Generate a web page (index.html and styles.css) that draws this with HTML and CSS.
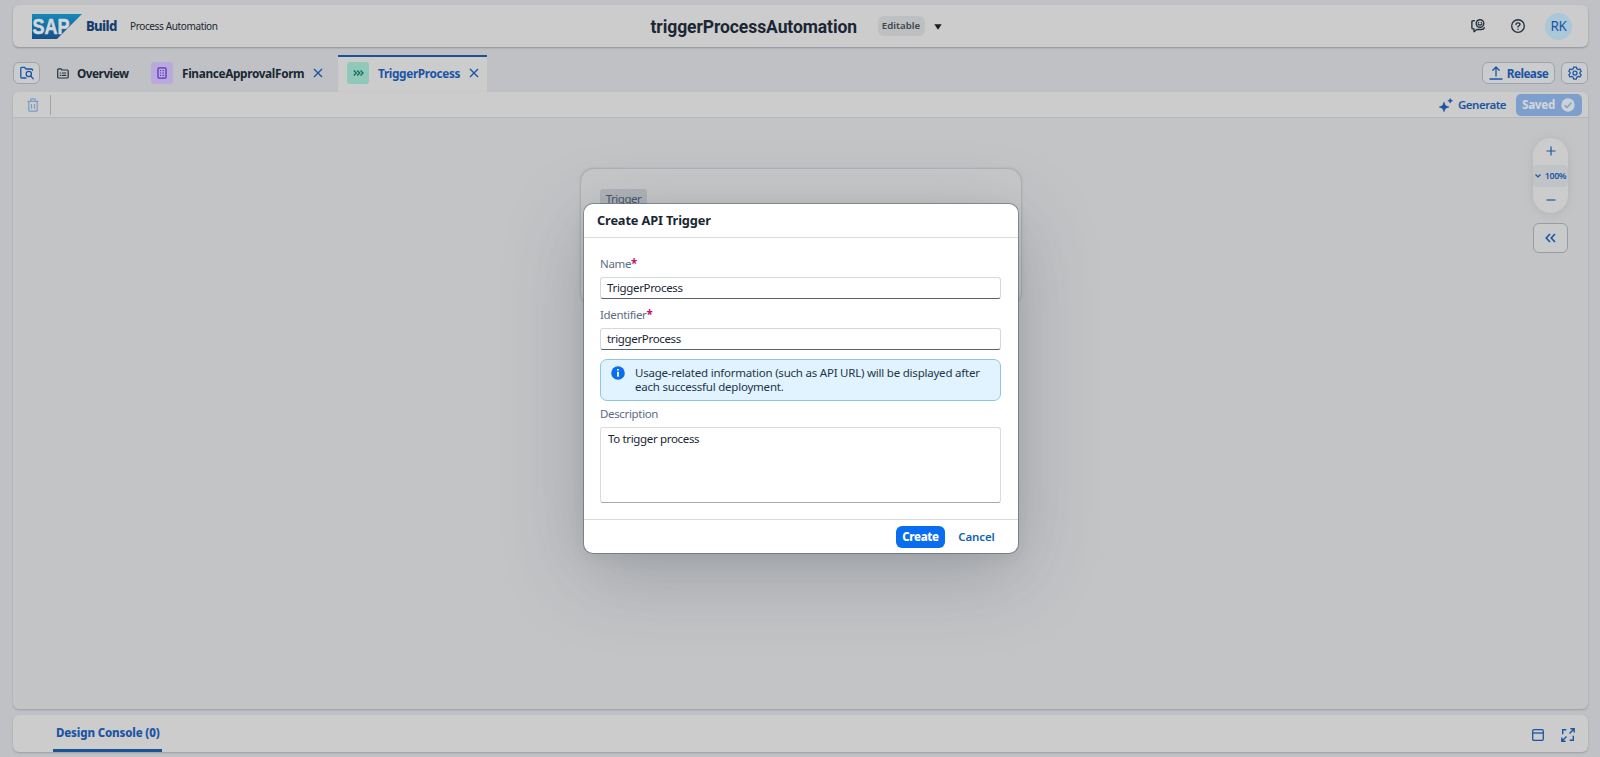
FILE: index.html
```html
<!DOCTYPE html>
<html lang="en">
<head>
<meta charset="utf-8">
<title>triggerProcessAutomation</title>
<link rel="stylesheet" href="styles.css">
</head>
<body>
<div class="app">
  <header class="shell">
    <div class="brand">
      <svg class="logo" width="50" height="25" viewBox="0 0 50 25">
        <defs><linearGradient id="sap" x1="0" y1="0" x2="0" y2="1"><stop offset="0" stop-color="#1889b8"/><stop offset="1" stop-color="#17508b"/></linearGradient></defs>
        <path d="M0 0H50L25 25H0Z" fill="url(#sap)"/>
        <text x="0.5" y="20" textLength="37" lengthAdjust="spacingAndGlyphs" class="logo-text">SAP</text>
      </svg>
      <span class="build">Build</span>
      <span class="product">Process Automation</span>
    </div>
    <div class="project">
      <h1 class="project-name">triggerProcessAutomation</h1>
      <span class="badge">Editable</span>
      <svg class="caret" width="8" height="6" viewBox="0 0 8 6"><path d="M.3.3H7.7L4 5.8Z" fill="#161e26"/></svg>
    </div>
    <div class="shell-actions">
      <svg width="16" height="16" viewBox="0 0 16 16" fill="none" stroke="#26323e" stroke-width="1.4" stroke-linecap="round" stroke-linejoin="round"><path d="M4.3 2.7H3Q1.9 2.7 1.9 3.8V9.7Q1.9 10.9 3 10.9H4V13.7L6.9 11.5H11.2Q13.8 11.5 14.3 9.7"/><circle cx="10" cy="5.5" r="3.8"/><path d="M8.1 6Q10 8.2 11.9 6"/><path d="M8.7 4.4V4.5M11.3 4.4V4.5"/></svg>
      <svg width="16" height="16" viewBox="0 0 16 16" fill="none" stroke="#26323e" stroke-width="1.35" stroke-linecap="round" stroke-linejoin="round"><circle cx="8" cy="8" r="6.3"/><path d="M6 6.6Q6 4.8 8 4.8T10 6.5Q10 7.4 8 8.5V9"/><path d="M8 11.1V11.2"/></svg>
      <span class="avatar">RK</span>
    </div>
  </header>

  <nav class="tabs">
    <button class="icon-btn">
      <svg width="14" height="14" viewBox="0 0 14 14" fill="none" stroke="#1a55a5" stroke-width="1.3" stroke-linecap="round" stroke-linejoin="round"><path d="M6 12H2Q.8 12 .8 10.8V2.5Q.8 1.3 2 1.3H4.5L6 3H11.3Q12.6 3 12.6 4.3"/><circle cx="8.8" cy="8" r="2.6"/><path d="M10.8 10L13.2 12.8"/></svg>
    </button>
    <a class="tab tab-overview">
      <svg width="12" height="11" viewBox="0 0 12 11" fill="none" stroke="#26323e" stroke-width="1.2" stroke-linecap="round" stroke-linejoin="round"><path d="M.7 9V1.8Q.7.8 1.7.8H4L5 2H10.2Q11.2 2 11.2 3V9Q11.2 10 10.2 10H1.7Q.7 10 .7 9Z"/><path d="M3.2 5H3.6M5.3 5H8.8M3.2 7.4H3.6M5.3 7.4H8.8"/></svg>
      <span class="t-overview">Overview</span>
    </a>
    <a class="tab tab-form">
      <span class="tile tile-form"><svg width="10" height="12" viewBox="0 0 10 12" fill="none" stroke="#5b35c0" stroke-width="1.3"><rect x="1" y=".8" width="8" height="10.4" rx="1.2"/><path d="M3 3.6H4.1M5.5 3.6H7M3 6H4.1M5.5 6H7M3 8.4H4.1M5.5 8.4H7" stroke-width="1"/></svg></span>
      <span class="t-form">FinanceApprovalForm</span>
      <svg class="close" width="10" height="10" viewBox="0 0 10 10"><path d="M1 1L9 9M9 1L1 9" stroke="#1a55a5" stroke-width="1.4"/></svg>
    </a>
    <a class="tab tab-active">
      <span class="tile tile-process"><svg width="11" height="6" viewBox="0 0 11 6" fill="none" stroke="#136a60" stroke-width="1.3"><path d="M.8.5L3.3 3L.8 5.5M4.2.5L6.7 3L4.2 5.5M7.5.5L10 3L7.5 5.5"/></svg></span>
      <span class="t-process">TriggerProcess</span>
      <svg class="close" width="10" height="10" viewBox="0 0 10 10"><path d="M1 1L9 9M9 1L1 9" stroke="#1a55a5" stroke-width="1.4"/></svg>
    </a>
    <div class="tab-actions">
      <button class="release">
        <svg width="14" height="14" viewBox="0 0 14 14" fill="none" stroke="#1a55a5" stroke-width="1.3" stroke-linecap="round" stroke-linejoin="round"><path d="M7 10V1.2M3.8 4.2L7 1L10.2 4.2M1 13H13"/></svg>
        <span class="t-release">Release</span>
      </button>
      <button class="icon-btn">
        <svg width="14" height="14" viewBox="0 0 14 14" fill="none" stroke="#1a55a5" stroke-width="1.25" stroke-linejoin="round"><path d="M5.7 1H8.3L8.8 2.8L10.2 3.6L12 3L13.2 5.2L11.9 6.4V7.6L13.2 8.8L12 11L10.2 10.4L8.8 11.2L8.3 13H5.7L5.2 11.2L3.8 10.4L2 11L.8 8.8L2.1 7.6V6.4L.8 5.2L2 3L3.8 3.6L5.2 2.8Z"/><circle cx="7" cy="7" r="2"/></svg>
      </button>
    </div>
  </nav>

  <main class="editor">
    <div class="toolbar">
      <svg class="trash" width="12" height="14" viewBox="0 0 12 14" fill="none" stroke="#7b9bc6" stroke-width="1.2" stroke-linejoin="round"><path d="M.5 3.4H11.5M3.7 3.2V1.6Q3.7.8 4.5.8H7.5Q8.3.8 8.3 1.6V3.2M1.8 3.6V12.3Q1.8 13.2 2.7 13.2H9.3Q10.2 13.2 10.2 12.3V3.6M4.5 6V10.7M7.5 6V10.7"/></svg>
      <span class="divider"></span>
      <div class="toolbar-right">
        <svg width="14" height="14" viewBox="0 0 14 14" fill="#1a55a5" stroke="#1a55a5" stroke-width=".5" stroke-linejoin="round"><path d="M5 4L6.4 7.6L10 9L6.4 10.4L5 13.8L3.6 10.4L.2 9L3.6 7.6Z"/><path d="M11.2.4L11.9 2.1L13.6 2.8L11.9 3.5L11.2 5.2L10.5 3.5L8.8 2.8L10.5 2.1Z"/></svg>
        <span class="t-generate">Generate</span>
        <button class="saved"><span class="t-saved">Saved</span><svg width="14" height="14" viewBox="0 0 14 14"><circle cx="7" cy="7" r="6.7" fill="#cdd0d4"/><path d="M3.7 7.2L6 9.5L10.3 4.8" fill="none" stroke="#7d9fcd" stroke-width="1.4"/></svg></button>
      </div>
    </div>
    <div class="canvas">
      <section class="trigger-card"><span class="trigger-tag">Trigger</span></section>
      <aside class="view-controls">
        <div class="zoom">
          <span class="zoom-step"><svg width="10" height="10" viewBox="0 0 10 10"><path d="M5 .5V9.5M.5 5H9.5" stroke="#1a55a5" stroke-width="1.2"/></svg></span>
          <span class="zoom-level"><svg width="6" height="4" viewBox="0 0 6 4"><path d="M.5.5L3 3L5.5.5" fill="none" stroke="#1a55a5" stroke-width="1.2"/></svg><b>100%</b></span>
          <span class="zoom-step"><svg width="10" height="10" viewBox="0 0 10 10"><path d="M.5 5H9.5" stroke="#1a55a5" stroke-width="1.2"/></svg></span>
        </div>
        <button class="collapse"><svg width="11" height="10" viewBox="0 0 11 10" fill="none" stroke="#1a55a5" stroke-width="1.6"><path d="M5 1L1.2 5L5 9M10 1L6.2 5L10 9"/></svg></button>
      </aside>
    </div>
  </main>

  <footer class="console">
    <span class="console-tab"><span class="t-console">Design Console (0)</span></span>
    <div class="console-actions">
      <svg width="12" height="12" viewBox="0 0 12 12" fill="none" stroke="#1a55a5" stroke-width="1.3"><rect x=".7" y=".7" width="10.6" height="10.6" rx="1.3"/><path d="M.7 4H11.3"/></svg>
      <svg width="14" height="14" viewBox="0 0 14 14" fill="none" stroke="#1a55a5" stroke-width="1.4"><path d="M5.3 1.8H1.7V6.2M8.7 12.2H12.3V7.8M8.5 5.5L13 1M9.4.8H13.2V4.6M5.5 8.5L1 13M.8 9.4V13.2H4.6"/></svg>
    </div>
  </footer>
</div>

<div class="dialog" role="dialog">
  <header class="dialog-head"><h2 class="t-dialog">Create API Trigger</h2></header>
  <div class="dialog-body">
    <label class="label"><span class="t-name">Name</span><b>*</b></label>
    <div class="input"><span class="v-name">TriggerProcess</span></div>
    <label class="label"><span class="t-ident">Identifier</span><b>*</b></label>
    <div class="input"><span class="v-ident">triggerProcess</span></div>
    <div class="info">
      <svg width="14" height="14" viewBox="0 0 14 14"><circle cx="7" cy="7" r="6.8" fill="#0a6cee"/><path d="M6.1 3H7.9V4.6H6.1ZM6.1 5.7H7.9V10.8H6.1Z" fill="#fff"/></svg>
      <p class="info-text"><span class="i-one">Usage-related information (such as API URL) will be displayed after</span><br><span class="i-two">each successful deployment.</span></p>
    </div>
    <label class="label label-desc"><span class="t-desc">Description</span></label>
    <div class="textarea"><span class="v-desc">To trigger process</span></div>
  </div>
  <footer class="dialog-foot">
    <button class="create"><span class="t-create">Create</span></button>
    <button class="cancel"><span class="t-cancel">Cancel</span></button>
  </footer>
</div>
</body>
</html>
```
FILE: styles.css
```css
* { box-sizing: border-box; }
body {
  margin: 0;
  width: 1600px;
  height: 757px;
  overflow: hidden;
  background: #bfc1c4;
  color: #1a2733;
  font-family: "Noto Sans", sans-serif;
  font-size: 11.5px;
  letter-spacing: -0.34px;
  white-space: nowrap;
}
h1, h2, p { margin: 0; }
svg { display: block; flex: none; }
button { margin: 0; padding: 0; font: inherit; letter-spacing: inherit; border: 0; background: none; color: #1a55a5; }

.app {
  display: flex;
  flex-direction: column;
  height: 757px;
  padding: 5px 12px 5px 13px;
}

/* Shell bar */
.shell {
  display: grid;
  grid-template-columns: 637.5px 1fr auto;
  align-items: center;
  height: 42px;
  background: #cccccc;
  border-radius: 6px;
  box-shadow: 0 1px 2px #8d9094;
}
.brand { display: flex; align-items: center; padding-left: 19px; }
.logo-text { font: bold 21.5px "Liberation Sans", sans-serif; fill: #d2d8dc; stroke: #d2d8dc; stroke-width: .6px; letter-spacing: 0; }
.build { margin-left: 4px; font-size: 13.2px; font-weight: 800; color: #153e70; letter-spacing: -0.7px; width: 31px; }
.product { margin-left: 13px; font-size: 10px; letter-spacing: -0.37px; }
.project { display: flex; align-items: center; }
.project-name { width: 227px; font: bold 17.5px Roboto, sans-serif; letter-spacing: -0.08px; padding-top: 1px; }
.badge {
  width: 47px;
  height: 20px;
  line-height: 20px;
  text-align: center;
  border-radius: 6px;
  background: #bdbfc1;
  color: #3f464d;
  font-size: 9.7px;
  font-weight: 600;
  letter-spacing: 0;
}
.caret { margin: 1px 0 0 9px; }
.shell-actions { display: flex; align-items: center; gap: 24px; padding-right: 16px; }
.avatar {
  width: 27px;
  height: 27px;
  margin-left: -5px;
  border-radius: 50%;
  background: #aac8d8;
  color: #1a55a5;
  font-size: 13.5px;
  line-height: 27px;
  text-align: center;
}

/* Tabs */
.tabs { display: flex; align-items: center; height: 37px; margin-top: 8px; padding-bottom: 1px; color: #1a2733; font-weight: 700; font-size: 11.8px; }
.icon-btn, .release {
  display: flex;
  align-items: center;
  justify-content: center;
  width: 27px;
  height: 22px;
  border: 1px solid #9da3aa;
  border-radius: 6px;
  background: #cbcccd;
}
.tab { display: flex; align-items: center; height: 36px; }
.tab-overview { width: 94px; margin-left: 17px; gap: 8px; letter-spacing: -0.5px; }
.tab-form { width: 187px; }
.tile { display: grid; place-items: center; width: 22px; height: 22px; border-radius: 3px; margin-right: 9px; }
.tile-form { background: #b9a9dc; }
.tile-process { background: #90c9b9; }
.close { margin-left: 9px; }
.t-form { width: 122px; }
.tab-active { width: 149px; height: 38px; margin-bottom: -2px; padding: 0 0 2px 9px; background: #cccccc; box-shadow: inset 0 2px #1a5296; color: #1a55a5; }
.t-process { width: 82px; }
.tab-actions { display: flex; gap: 6px; margin-left: auto; }
.release { width: 73px; gap: 4px; letter-spacing: -0.55px; }

/* Editor */
.editor { display: flex; flex-direction: column; height: 617px; border-radius: 6px; background: #c3c4c6; box-shadow: 0 1px 2px #9a9da1; }
.toolbar { display: flex; align-items: center; height: 26px; padding: 0 6px 0 14px; background: #cccccc; border-bottom: 1px solid #b5b7b9; border-radius: 6px 6px 0 0; }
.divider { width: 1px; height: 20px; margin-left: 11px; background: #a2a5a8; }
.toolbar-right { display: flex; align-items: center; margin-left: auto; color: #1a55a5; font-weight: 600; }
.t-generate { width: 58px; margin-left: 5px; letter-spacing: -0.5px; }
.saved { display: flex; align-items: center; width: 66px; height: 22px; padding-left: 6px; border-radius: 5px; background: #7d9fcd; color: #d1d4d8; font-weight: 800; }
.t-saved { width: 39px; text-align: left; }
.canvas { display: flex; justify-content: space-between; flex: 1; padding: 50px 20px 0 567px; }
.trigger-card { width: 442px; height: 138px; padding: 20px 19px; border: 1px solid #afb2b5; border-radius: 14px; background: #c7c8c9; box-shadow: 0 0 2px #aaa; }
.trigger-tag { display: block; width: 47px; height: 20px; border-radius: 3px; background: #b0b4b8; color: #47576a; text-align: center; line-height: 20px; letter-spacing: -0.5px; }
.view-controls { display: flex; flex-direction: column; gap: 10px; width: 35px; margin-top: -30px; color: #1a55a5; }
.zoom { display: flex; flex-direction: column; height: 75px; border-radius: 18px; background: #cccccc; box-shadow: 0 1px 8px #b1b3b5; }
.zoom-step { display: grid; place-items: center; flex: 1; }
.zoom-level { display: flex; align-items: center; justify-content: center; gap: 4px; height: 22px; background: #c1c4c7; border-radius: 4px; font-size: 8.8px; letter-spacing: -0.35px; }
.zoom-level b { font-weight: 600; }
.collapse { display: grid; place-items: center; height: 30px; border: 1px solid #969da5; border-radius: 6px; background: #c9cacb; }

/* Console */
.console { display: flex; justify-content: space-between; height: 37px; margin-top: 6px; padding: 0 13px 0 40px; background: #cccccc; border-radius: 6px; box-shadow: 0 1px 2px #9a9da1; }
.console-tab { width: 109px; padding: 10px 0 0 3px; border-bottom: 3px solid #1a5296; border-radius: 2px 2px 0 0; color: #1a55a5; font-weight: 800; letter-spacing: -0.15px; }
.console-actions { display: flex; align-items: center; gap: 17px; padding-top: 3px; }

/* Dialog */
.dialog {
  position: absolute;
  left: 584px;
  top: 204px;
  width: 434px;
  height: 349px;
  display: flex;
  flex-direction: column;
  border-radius: 9px;
  background: #fff;
  box-shadow: 0 0 0 1px rgba(50, 60, 70, .4), 0 20px 80px rgba(50, 60, 75, .28), 0 4px 16px rgba(50, 60, 75, .08);
}
.dialog-head { height: 34px; padding-left: 13px; border-bottom: 1px solid #d9dbdd; }
.t-dialog { font-size: 12.8px; line-height: 33px; font-weight: 700; letter-spacing: -0.15px; }
.dialog-body { display: flex; flex-direction: column; height: 281px; padding: 18px 17px 0 16px; }
.label { height: 21px; line-height: 16px; color: #5b6d82; }
.label b { color: #c0126f; font-size: 11.5px; }
.input { display: flex; align-items: center; height: 22px; margin-bottom: 8px; padding-left: 6px; border: 1px solid #d5d8db; border-bottom-color: #59636e; border-radius: 3px; line-height: 20px; }
.info { display: flex; gap: 10px; height: 42px; margin-top: 1px; padding: 6px 10px; border: 1px solid #8bc8dd; border-radius: 7px; background: #e1f3fe; }
.info-text { line-height: 14px; letter-spacing: -0.22px; color: #223548; }
.label-desc { margin-top: 5px; }
.textarea { height: 76px; padding: 3px 7px; line-height: 15px; border: 1px solid #d8dadd; border-bottom: 1.5px solid #a4a9ae; border-radius: 3px; }
.dialog-foot { display: flex; align-items: center; justify-content: flex-end; height: 34px; padding-right: 11px; border-top: 1px solid #d7d9db; }
.create { width: 49px; height: 22px; margin-right: 1px; border-radius: 6px; background: #0a6cee; color: #fff; font-weight: 800; }
.cancel { width: 61px; height: 22px; color: #1262b8; font-weight: 600; letter-spacing: -0.15px; }
```
